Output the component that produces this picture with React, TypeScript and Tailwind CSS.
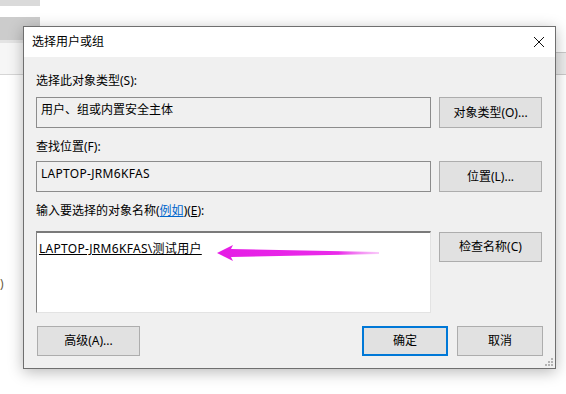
import React from "react";

const FONT = "font-['Noto_Sans','Noto_Sans_CJK_SC',sans-serif]";

function WinButton({ children, primary = false, className = "" }: { children: React.ReactNode; primary?: boolean; className?: string }) {
  return (
    <button
      className={`flex items-center justify-center bg-[#e1e1e1] text-[12px] leading-4 text-black ${
        primary ? "border-2 border-[#0078d7]" : "border border-[#adadad]"
      } ${className}`}
    >
      {children}
    </button>
  );
}

function CloseIcon() {
  return (
    <svg width="12" height="12" viewBox="0 0 12 12" fill="none" stroke="#111" strokeWidth="1">
      <path d="M1 1 L11 11 M11 1 L1 11" />
    </svg>
  );
}

function ResizeGrip() {
  return (
    <svg width="8" height="8" viewBox="0 0 8 8" fill="#b3b3b3">
      <rect x="6" y="0" width="2" height="2" />
      <rect x="3" y="3" width="2" height="2" />
      <rect x="6" y="3" width="2" height="2" />
      <rect x="0" y="6" width="2" height="2" />
      <rect x="3" y="6" width="2" height="2" />
      <rect x="6" y="6" width="2" height="2" />
    </svg>
  );
}

function PinkArrow() {
  return (
    <svg width="164" height="18" viewBox="0 0 164 18">
      <defs>
        <linearGradient id="fade" x1="0" y1="0" x2="1" y2="0">
          <stop offset="0" stopColor="#e51de5" />
          <stop offset="0.75" stopColor="#ea2aea" />
          <stop offset="1" stopColor="#f6a8f6" stopOpacity="0.6" />
        </linearGradient>
      </defs>
      <polygon points="0,9 16,1 14,5 162,8 162,10 14,13 16,17" fill="url(#fade)" />
    </svg>
  );
}

export default function App() {
  return (
    <div className={`relative w-[566px] h-[394px] overflow-hidden bg-white ${FONT}`}>
      {/* window underneath */}
      <div className="flex flex-col w-[40px]">
        <div className="h-[6px] bg-[#dadada]" />
        <div className="h-[11px]" />
        <div className="h-[23px] bg-[#cccccc]" />
      </div>
      <div className="w-[40px] h-[3px] bg-[#e4e4e4]" />
      <div className="w-[24px] h-[32px] bg-[#f6f6f6] border-b border-[#d6d6d6]" />
      <div className="absolute left-0 top-[275px] text-[12px] text-[#6a5a40]">)</div>
      <div className="absolute right-0 top-[52px] w-[12px] h-[23px] bg-[#ebebeb] border-y border-[#c9c9c9]" />

      {/* dialog */}
      <div className="absolute left-[23px] top-[26px] w-[533px] h-[343px] flex flex-col border border-[#6f6f6f] bg-[#f0f0f0] shadow-[0_3px_14px_rgba(0,0,0,0.28)]">
        <div className="h-[30px] bg-white flex items-center justify-between pl-2 pr-[10px]">
          <span className="text-[12px] leading-4 text-black">选择用户或组</span>
          <CloseIcon />
        </div>

        <div className="relative flex-1 flex flex-col px-3 pt-4 text-[12px] leading-4 text-black">
          <div className="h-4">选择此对象类型(S):</div>
          <div className="mt-2 flex gap-2">
            <div className="w-[395px] h-[31px] border border-[#8c8c8c] pl-1 pt-1">用户、组或内置安全主体</div>
            <WinButton className="w-[103px] h-[31px]">对象类型(O)...</WinButton>
          </div>

          <div className="mt-[11px] h-4">查找位置(F):</div>
          <div className="mt-[6px] flex gap-2">
            <div className="w-[395px] h-[31px] border border-[#8c8c8c] pl-1 pt-1 tracking-[0.3px]">LAPTOP-JRM6KFAS</div>
            <WinButton className="w-[103px] h-[31px]">位置(L)...</WinButton>
          </div>

          <div className="mt-[11px] h-4">
            输入要选择的对象名称(<span className="text-[#0066cc] underline">例如</span>)(<span className="underline">E</span>):
          </div>
          <div className="mt-3 flex items-start gap-2">
            <div className="relative w-[395px] h-[82px] bg-white border-t-2 border-l border-t-[#7a7a7a] border-l-[#828282] border-r border-b border-r-[#e3e3e3] border-b-[#e3e3e3] pl-[2px] pt-2">
              <span className="underline tracking-[0.3px]">LAPTOP-JRM6KFAS\测试用户</span>
              <div className="absolute left-[180px] top-[11px]">
                <PinkArrow />
              </div>
            </div>
            <WinButton className="w-[103px] h-[30px] mt-px">检查名称(C)</WinButton>
          </div>

          <div className="mt-[13px] flex items-center">
            <WinButton className="ml-px w-[103px] h-[30px]">高级(A)...</WinButton>
            <div className="flex-1" />
            <WinButton primary className="w-[86px] h-[30px]">确定</WinButton>
            <WinButton className="ml-[9px] w-[86px] h-[30px]">取消</WinButton>
          </div>

          <div className="absolute right-[2px] bottom-[2px]">
            <ResizeGrip />
          </div>
        </div>
      </div>
    </div>
  );
}
